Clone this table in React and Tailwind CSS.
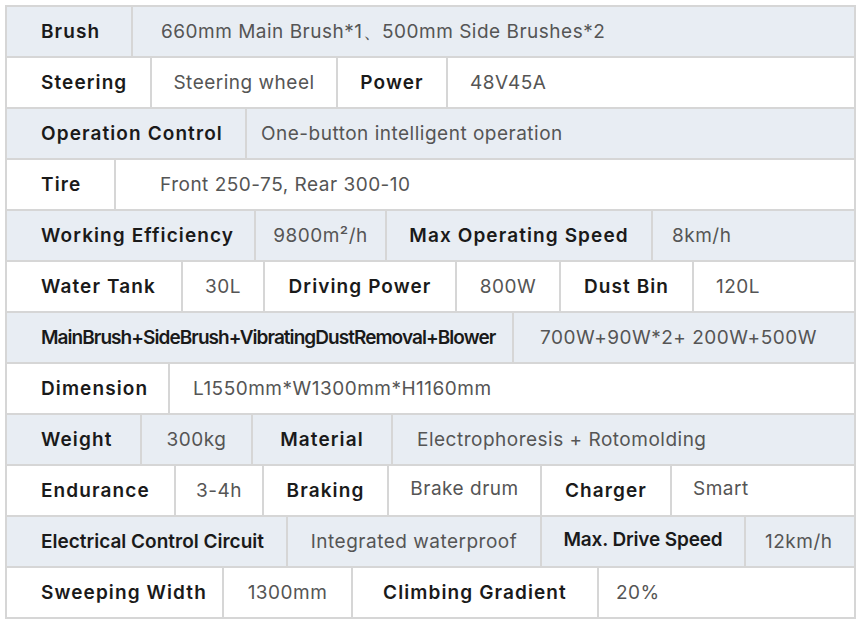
const rows = [
  [
    { t: "Brush", w: "w-[126px]", label: true },
    { t: "660mm Main Brush*1、500mm Side Brushes*2", pad: "pl-[28px]" },
  ],
  [
    { t: "Steering", w: "w-[145px]", label: true },
    { t: "Steering wheel", w: "w-[186px]" },
    { t: "Power", w: "w-[110px]", label: true },
    { t: "48V45A", pad: "pl-[22px]" },
  ],
  [
    { t: "Operation Control", w: "w-[240px]", label: true },
    { t: "One-button intelligent operation", pad: "pl-[14px]" },
  ],
  [
    { t: "Tire", w: "w-[109px]", label: true },
    { t: "Front 250-75, Rear 300-10", pad: "pl-[44px]" },
  ],
  [
    { t: "Working Efficiency", w: "w-[249px]", label: true },
    { t: "9800m²/h", w: "w-[131px]" },
    { t: "Max Operating Speed", w: "w-[266px]", label: true },
    { t: "8km/h", pad: "pl-[19px]" },
  ],
  [
    { t: "Water Tank", w: "w-[176px]", label: true },
    { t: "30L", w: "w-[82px]" },
    { t: "Driving Power", w: "w-[192px]", label: true },
    { t: "800W", w: "w-[104px]" },
    { t: "Dust Bin", w: "w-[133px]", label: true },
    { t: "120L", pad: "pl-[22px]" },
  ],
  [
    { t: "MainBrush+SideBrush+VibratingDustRemoval+Blower", w: "w-[507px]", label: true, track: "tracking-[-0.95px]" },
    { t: "700W+90W*2+ 200W+500W", pad: "pl-[26px]" },
  ],
  [
    { t: "Dimension", w: "w-[163px]", label: true },
    { t: "L1550mm*W1300mm*H1160mm", pad: "pl-[23px]" },
  ],
  [
    { t: "Weight", w: "w-[135px]", label: true },
    { t: "300kg", w: "w-[111px]" },
    { t: "Material", w: "w-[140px]", label: true },
    { t: "Electrophoresis + Rotomolding", pad: "pl-[24px]" },
  ],
  [
    { t: "Endurance", w: "w-[169px]", label: true },
    { t: "3-4h", w: "w-[88px]" },
    { t: "Braking", w: "w-[125px]", label: true },
    { t: "Brake drum", w: "w-[153px]", up: true },
    { t: "Charger", w: "w-[130px]", label: true },
    { t: "Smart", pad: "pl-[21px]", up: true },
  ],
  [
    { t: "Electrical Control Circuit", w: "w-[281px]", label: true, track: "tracking-[0px]" },
    { t: "Integrated waterproof", w: "w-[254px]" },
    { t: "Max. Drive Speed", w: "w-[204px]", label: true, track: "tracking-[-0.15px]", up: true },
    { t: "12km/h", pad: "pl-[19px]" },
  ],
  [
    { t: "Sweeping Width", w: "w-[217px]", label: true },
    { t: "1300mm", w: "w-[129px]" },
    { t: "Climbing Gradient", w: "w-[246px]", label: true },
    { t: "20%", pad: "pl-[17px]" },
  ],
]

function Cell({ cell, first }) {
  const last = !cell.w
  let place = `${cell.w} shrink-0 justify-center`
  if (last) place = `flex-1 ${cell.pad}`
  else if (first) place = `${cell.w} shrink-0 pl-[34px]`
  return (
    <div
      className={`h-full flex items-center border-r-2 border-[#d6d6d6] ${place} ${
        cell.up ? "pb-[4px]" : ""
      }`}
    >
      <span
        className={`whitespace-nowrap text-[19px] leading-none ${
          cell.label
            ? `font-semibold text-[#1a1a1a] ${cell.track || "tracking-[1.1px]"}`
            : "font-normal text-[#555555] tracking-[0.5px]"
        }`}
      >
        {cell.t}
      </span>
    </div>
  )
}

export default function App() {
  return (
    <div className="min-h-screen bg-white pt-[5px] pl-[5px] font-['Inter','Liberation_Sans',sans-serif]">
      <div className="w-[851px] border-l-2 border-t-2 border-[#d6d6d6]">
        {rows.map((row, i) => (
          <div
            key={i}
            className={`flex h-[51px] border-b-2 border-[#d6d6d6] ${
              i % 2 === 0 ? "bg-[#e8edf3]" : "bg-white"
            }`}
          >
            {row.map((cell, j) => (
              <Cell key={j} cell={cell} first={j === 0} />
            ))}
          </div>
        ))}
      </div>
    </div>
  )
}
